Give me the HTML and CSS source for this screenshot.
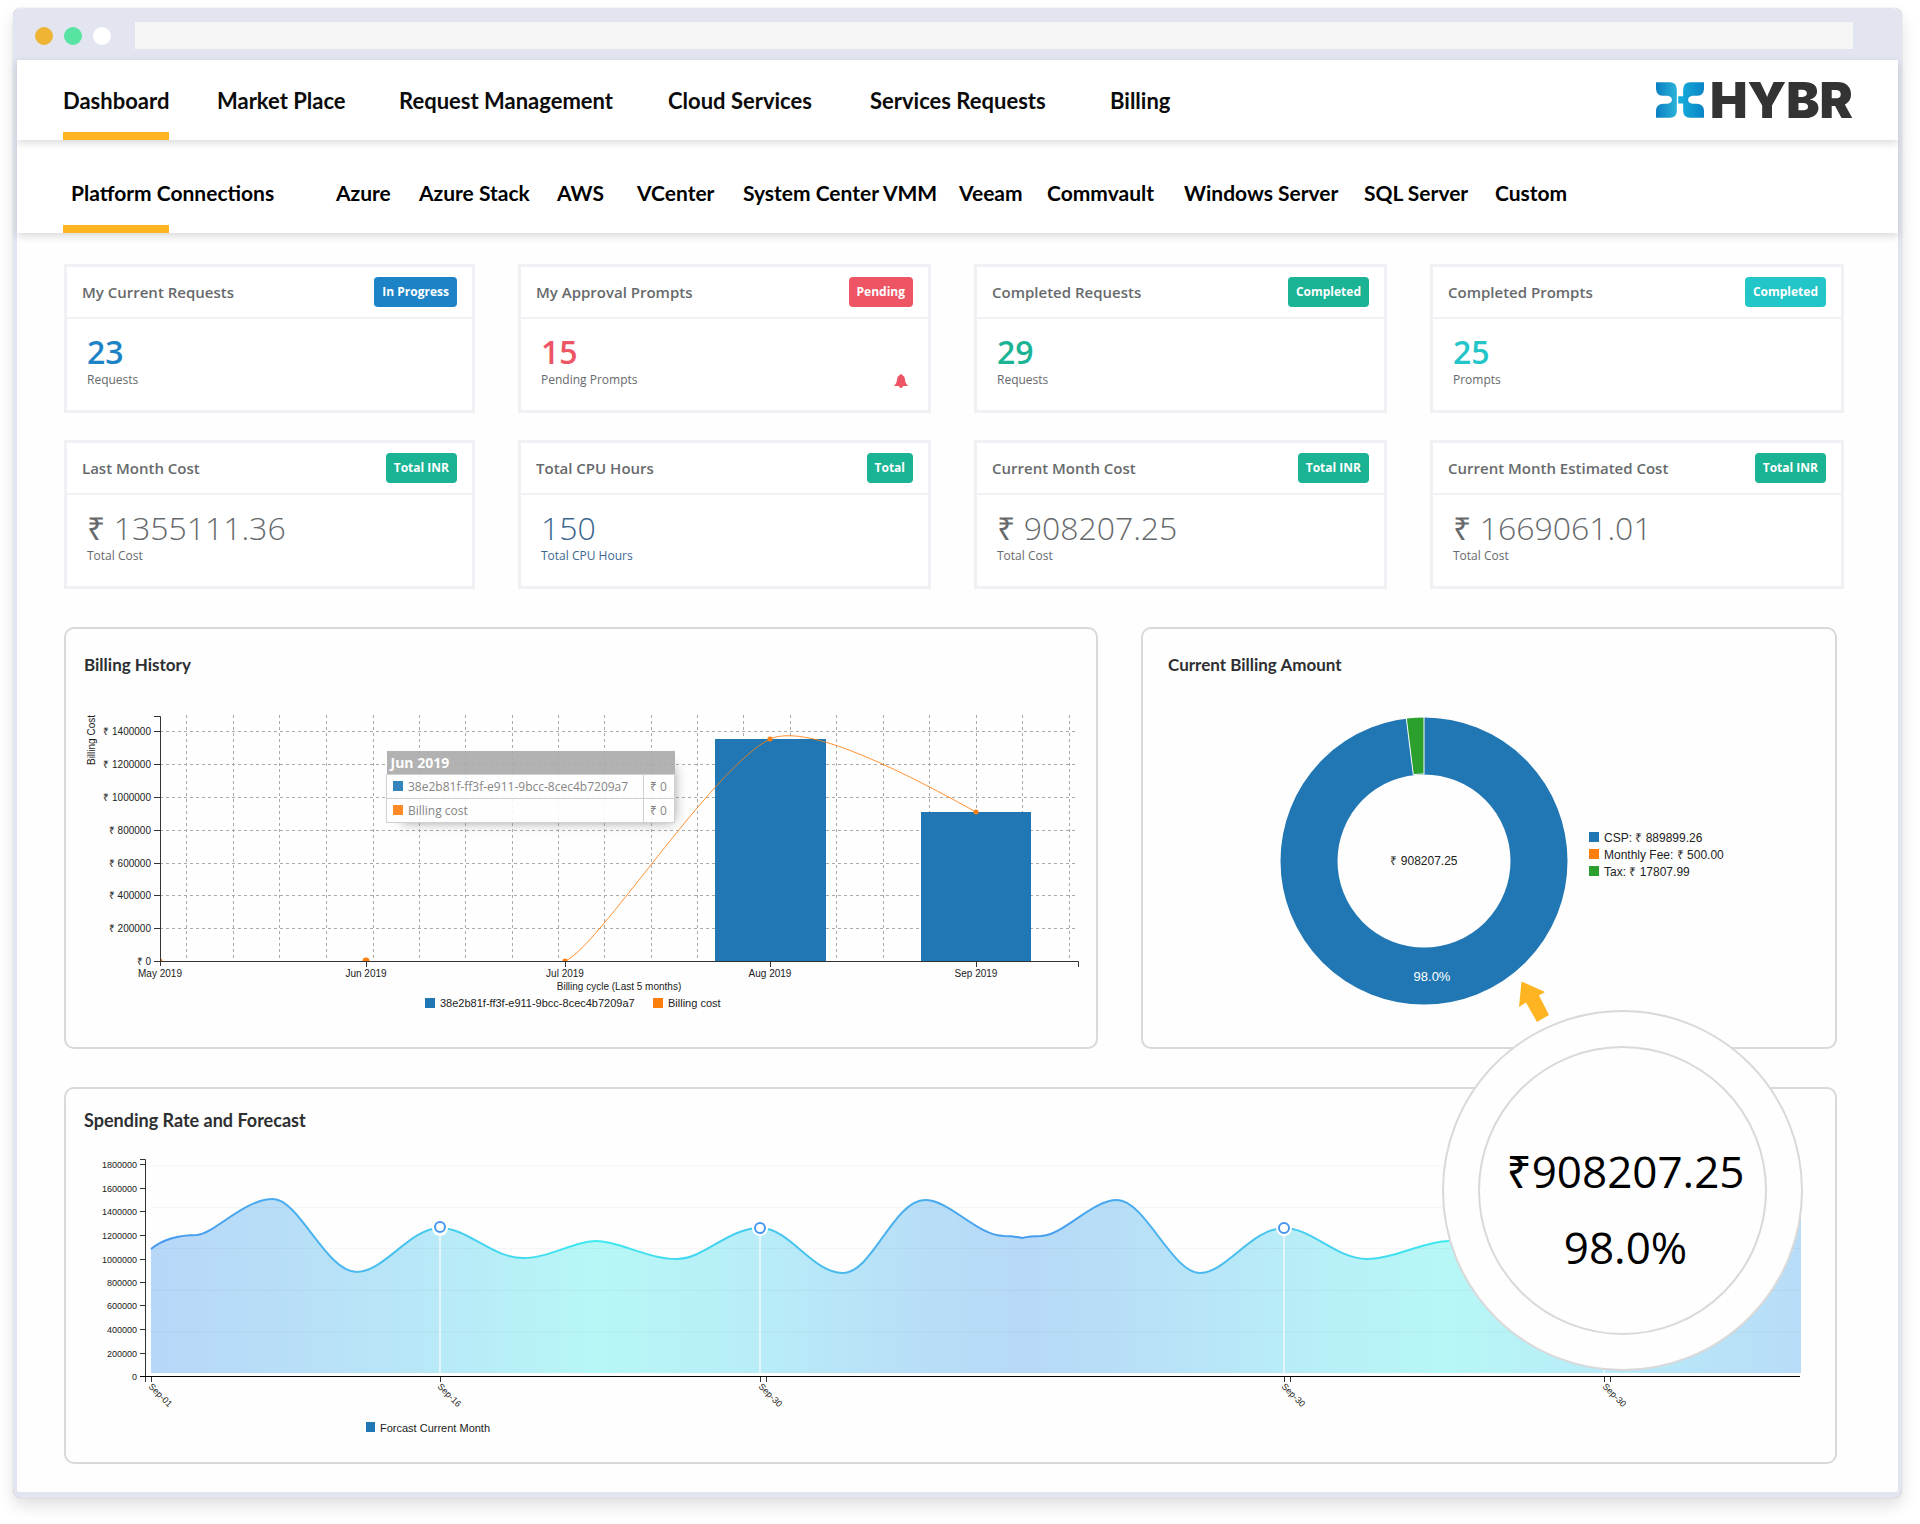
FILE: index.html
```html
<!DOCTYPE html>
<html lang="en">
<head>
<meta charset="utf-8">
<title>HYBR Dashboard</title>
<meta name="viewport" content="width=device-width, initial-scale=1">
<link rel="stylesheet" href="styles.css">
</head>
<body>
<div class="window">
  <div class="window-bar">
    <span class="dot dot-amber"></span>
    <span class="dot dot-green"></span>
    <span class="dot dot-white"></span>
    <input class="address" type="text" aria-label="Address">
  </div>

  <header class="bar bar-main">
    <nav class="nav nav-main" aria-label="Main">
      <a class="active" href="#">Dashboard</a>
      <a href="#">Market Place</a>
      <a href="#">Request Management</a>
      <a href="#">Cloud Services</a>
      <a href="#">Services Requests</a>
      <a href="#">Billing</a>
    </nav>
    <a class="logo" href="#" aria-label="HYBR">
      <svg class="logo-mark" viewBox="0 0 145 107" aria-hidden="true">
        <defs>
          <linearGradient id="petalLeft" x1="0" x2="1" y1="0" y2="0"><stop offset="0" stop-color="#0b7fc3"/><stop offset="1" stop-color="#2bb3d8"/></linearGradient>
          <linearGradient id="petalRight" x1="0" x2="1" y1="0" y2="0"><stop offset="0" stop-color="#16b0dc"/><stop offset="1" stop-color="#0a84c6"/></linearGradient>
        </defs>
        <path fill="url(#petalLeft)" d="M0 0H42Q63 1 63 22V85Q63 106 42 107H0V86Q1 66 22 65H34Q48 63 48 53Q48 43 34 41H22Q1 40 0 20Z"/>
        <path fill="url(#petalRight)" d="M145 0H103Q82 1 82 22V42H67V64H82V85Q82 106 103 107H145V86Q144 66 123 65H111Q97 63 97 53Q97 43 111 41H123Q144 40 145 20Z"/>
      </svg>
      <span class="logo-text">HYBR</span>
    </a>
  </header>

  <div class="bar bar-sub">
    <nav class="nav nav-sub" aria-label="Platforms">
      <a class="active" href="#">Platform Connections</a>
      <a href="#">Azure</a>
      <a href="#">Azure Stack</a>
      <a href="#">AWS</a>
      <a href="#">VCenter</a>
      <a href="#">System Center VMM</a>
      <a href="#">Veeam</a>
      <a href="#">Commvault</a>
      <a href="#">Windows Server</a>
      <a href="#">SQL Server</a>
      <a href="#">Custom</a>
    </nav>
  </div>

  <main>
    <section class="cards" aria-label="Summary">
      <article class="card blue">
        <div class="card-head"><h2>My Current Requests</h2><span class="badge">In Progress</span></div>
        <div class="card-body"><div><p class="count">23</p><p class="unit">Requests</p></div></div>
      </article>
      <article class="card red">
        <div class="card-head"><h2>My Approval Prompts</h2><span class="badge">Pending</span></div>
        <div class="card-body"><div><p class="count">15</p><p class="unit">Pending Prompts</p></div>
          <svg class="bell" viewBox="0 0 14 14" aria-hidden="true"><path d="M7 0Q8 0 8 1Q11 2 11 6Q11 9 14 12H0Q3 9 3 6Q3 2 6 1Q6 0 7 0ZM5 12H9Q9 14 7 14Q5 14 5 12Z"/></svg></div>
      </article>
      <article class="card green">
        <div class="card-head"><h2>Completed Requests</h2><span class="badge">Completed</span></div>
        <div class="card-body"><div><p class="count">29</p><p class="unit">Requests</p></div></div>
      </article>
      <article class="card teal">
        <div class="card-head"><h2>Completed Prompts</h2><span class="badge">Completed</span></div>
        <div class="card-body"><div><p class="count">25</p><p class="unit">Prompts</p></div></div>
      </article>
      <article class="card green">
        <div class="card-head"><h2>Last Month Cost</h2><span class="badge">Total INR</span></div>
        <div class="card-body"><div><p class="amount"><b>₹</b> 1355111.36</p><p class="unit">Total Cost</p></div></div>
      </article>
      <article class="card green hours">
        <div class="card-head"><h2>Total CPU Hours</h2><span class="badge">Total</span></div>
        <div class="card-body"><div><p class="amount">150</p><p class="unit">Total CPU Hours</p></div></div>
      </article>
      <article class="card green">
        <div class="card-head"><h2>Current Month Cost</h2><span class="badge">Total INR</span></div>
        <div class="card-body"><div><p class="amount"><b>₹</b> 908207.25</p><p class="unit">Total Cost</p></div></div>
      </article>
      <article class="card green">
        <div class="card-head"><h2>Current Month Estimated Cost</h2><span class="badge">Total INR</span></div>
        <div class="card-body"><div><p class="amount"><b>₹</b> 1669061.01</p><p class="unit">Total Cost</p></div></div>
      </article>
    </section>

    <div class="panels">
      <section class="panel history">
        <h2>Billing History</h2>
        <div class="chart">
          <svg viewBox="66 700 1030 347" role="img" aria-label="Billing cost per billing cycle">
            <g class="grid">
              <path d="M160 731.5H1078M160 764.5H1078M160 797.5H1078M160 830.5H1078M160 863.5H1078M160 895.5H1078M160 928.5H1078"/>
              <path d="M186.5 715V961M233.5 715V961M279.5 715V961M326.5 715V961M373.5 715V961M419.5 715V961M465.5 715V961M512.5 715V961M558.5 715V961M604.5 715V961M651.5 715V961M697.5 715V961M743.5 715V961M790.5 715V961M836.5 715V961M883.5 715V961M929.5 715V961M976.5 715V961M1022.5 715V961M1069.5 715V961"/>
            </g>
            <g class="bars"><rect x="715" y="739" width="111" height="222"/><rect x="921" y="812" width="110" height="149"/></g>
            <path class="trend" d="M565 961C596 950 712 768 770 739C800 726 868 752 976 812"/>
            <g class="points"><path d="M160 958.500A2.500 2.500 0 0 1 162.500 961H160Z"/><path d="M362.500 961A3.500 3.500 0 0 1 369.500 961Z"/><path d="M562.500 961A2.500 2.500 0 0 1 567.500 961Z"/><circle cx="770" cy="739" r="2.500"/><circle cx="976" cy="812" r="2.500"/></g>
            <path class="axis" d="M154 716.500H160.500V966M154 731.500H160M154 764.500H160M154 797.500H160M154 830.500H160M154 863.500H160M154 895.500H160M154 928.500H160M154 961.500H1078.500V967M366.500 961V967M565.500 961V967M770.500 961V967M976.500 961V967"/>
            <g class="tick end"><text x="151" y="735">₹ 1400000</text><text x="151" y="768">₹ 1200000</text><text x="151" y="801">₹ 1000000</text><text x="151" y="834">₹ 800000</text><text x="151" y="867">₹ 600000</text><text x="151" y="899">₹ 400000</text><text x="151" y="932">₹ 200000</text><text x="151" y="965">₹ 0</text></g>
            <g class="tick mid"><text x="160" y="977">May 2019</text><text x="366" y="977">Jun 2019</text><text x="565" y="977">Jul 2019</text><text x="770" y="977">Aug 2019</text><text x="976" y="977">Sep 2019</text><text x="619" y="990">Billing cycle (Last 5 months)</text></g>
            <text class="tick end" transform="translate(95 715) rotate(-90)">Billing Cost</text>
            <g class="legend"><rect class="c-blue" x="425" y="998" width="10" height="10"/><text x="440" y="1007">38e2b81f-ff3f-e911-9bcc-8cec4b7209a7</text><rect class="c-orange" x="653" y="998" width="10" height="10"/><text x="668" y="1007">Billing cost</text></g>
          </svg>
          <table class="tip">
            <thead><tr><th colspan="2">Jun 2019</th></tr></thead>
            <tbody>
              <tr><td><i class="key key-blue"></i>38e2b81f-ff3f-e911-9bcc-8cec4b7209a7</td><td>₹ 0</td></tr>
              <tr><td><i class="key key-orange"></i>Billing cost</td><td>₹ 0</td></tr>
            </tbody>
          </table>
        </div>
      </section>

      <section class="panel current">
        <h2>Current Billing Amount</h2>
        <div class="chart">
          <svg viewBox="1143 700 692 347" role="img" aria-label="Share of the current billing amount">
            <circle class="ring" cx="1424" cy="861" r="115"/>
            <path class="slice" d="M1424 717V774A87 87 0 0 0 1413.300 774.700L1406.300 718.100A144 144 0 0 1 1424 717Z"/>
            <text class="total" x="1424" y="865">₹ 908207.25</text>
            <text class="share" x="1432" y="981">98.0%</text>
            <g class="legend wide"><rect class="c-blue" x="1589" y="832" width="10" height="10"/><text x="1604" y="842">CSP: ₹ 889899.26</text><rect class="c-orange" x="1589" y="849" width="10" height="10"/><text x="1604" y="859">Monthly Fee: ₹ 500.00</text><rect class="c-green" x="1589" y="866" width="10" height="10"/><text x="1604" y="876">Tax: ₹ 17807.99</text></g>
            <path class="arrow" d="M1521.500 981.500L1545 992L1539 995.500L1549 1015L1537 1022L1526 1002.500L1519 1007Z"/>
          </svg>
        </div>
      </section>

      <section class="panel spending">
        <h2>Spending Rate and Forecast</h2>
        <div class="chart">
          <svg viewBox="66 1140 1769 322" role="img" aria-label="Spending rate and forecast">
            <defs>
              <linearGradient id="areaFill" gradientUnits="userSpaceOnUse" x1="151" y1="0" x2="1801" y2="0">
                <stop offset="0" stop-color="#b7d7f8"/><stop offset=".1" stop-color="#b8e0f7"/><stop offset=".2" stop-color="#b8edf8"/><stop offset=".27" stop-color="#b7f7f6"/><stop offset=".37" stop-color="#b8edf8"/><stop offset=".45" stop-color="#b8e0f7"/><stop offset=".53" stop-color="#b7d9f7"/><stop offset=".6" stop-color="#b8e0f7"/><stop offset=".69" stop-color="#b8edf8"/><stop offset=".785" stop-color="#b7f7f6"/><stop offset=".86" stop-color="#b8eef8"/><stop offset=".95" stop-color="#b8e2f7"/><stop offset="1" stop-color="#b8dcf8"/>
              </linearGradient>
              <linearGradient id="lineStroke" gradientUnits="userSpaceOnUse" x1="151" y1="0" x2="1801" y2="0">
                <stop offset="0" stop-color="#4597ee"/><stop offset=".12" stop-color="#4bb9ee"/><stop offset=".27" stop-color="#3deaf0"/><stop offset=".42" stop-color="#4bb9ee"/><stop offset=".53" stop-color="#459bee"/><stop offset=".64" stop-color="#4bb9ee"/><stop offset=".785" stop-color="#3deaf0"/><stop offset="1" stop-color="#4597ee"/>
              </linearGradient>
            </defs>
            <path fill="url(#areaFill)" d="M151 1249C162 1240 176 1235 197 1235C214 1234 244 1199 273 1199C299 1199 326 1272 357 1272C384 1272 410 1228 440 1228C468 1228 492 1258 523 1258C550 1258 574 1241 596 1241C620 1241 646 1259 677 1259C704 1259 728 1228 760 1228C790 1228 812 1273 843 1273C872 1273 894 1200 925 1200C950 1200 976 1235 1004 1236Q1014 1236 1022 1238Q1030 1236 1041 1236C1064 1235 1092 1200 1117 1200C1145 1200 1172 1273 1200 1273C1226 1273 1252 1228 1284 1228C1312 1228 1336 1259 1367 1259C1394 1259 1424 1241 1449 1241C1480 1241 1500 1259 1532 1259C1560 1259 1584 1228 1604 1228C1640 1228 1670 1272 1700 1272C1730 1272 1760 1200 1801 1200V1373H151Z"/>
            <path class="faint" d="M151 1166H1800M151 1207.500H1800M151 1248.500H1800M151 1290.500H1800M151 1332H1800"/>
            <path class="spend-line" stroke="url(#lineStroke)" d="M151 1249C162 1240 176 1235 197 1235C214 1234 244 1199 273 1199C299 1199 326 1272 357 1272C384 1272 410 1228 440 1228C468 1228 492 1258 523 1258C550 1258 574 1241 596 1241C620 1241 646 1259 677 1259C704 1259 728 1228 760 1228C790 1228 812 1273 843 1273C872 1273 894 1200 925 1200C950 1200 976 1235 1004 1236Q1014 1236 1022 1238Q1030 1236 1041 1236C1064 1235 1092 1200 1117 1200C1145 1200 1172 1273 1200 1273C1226 1273 1252 1228 1284 1228C1312 1228 1336 1259 1367 1259C1394 1259 1424 1241 1449 1241"/>
            <path class="drop" d="M440 1234V1373M760 1234V1373M1284 1234V1373M1604 1234V1373"/>
            <g class="halo"><circle cx="440" cy="1228" r="8"/><circle cx="760" cy="1228" r="8"/><circle cx="1284" cy="1228" r="8"/></g>
            <g class="marker"><circle cx="440" cy="1227" r="5"/><circle cx="760" cy="1228" r="5"/><circle cx="1284" cy="1228" r="5"/></g>
            <path class="axis" d="M140 1159.500H145.500V1382M140 1164.500H145M140 1188.500H145M140 1211.500H145M140 1235.500H145M140 1259.500H145M140 1282.500H145M140 1305.500H145M140 1329.500H145M140 1353.500H145M151.500 1377V1382M440.500 1377V1382M760.500 1377V1382M766.500 1377V1382M1284.500 1377V1382M1290.500 1377V1382M1604.500 1377V1382M1610.500 1377V1382"/>
            <path class="axis base" d="M140 1376.500H1800"/>
            <g class="tick small end"><text x="137" y="1168">1800000</text><text x="137" y="1192">1600000</text><text x="137" y="1215">1400000</text><text x="137" y="1239">1200000</text><text x="137" y="1263">1000000</text><text x="137" y="1286">800000</text><text x="137" y="1309">600000</text><text x="137" y="1333">400000</text><text x="137" y="1357">200000</text><text x="137" y="1380">0</text></g>
            <g class="tick small"><text transform="translate(148 1387) rotate(45)">Sep-01</text><text transform="translate(437 1387) rotate(45)">Sep-16</text><text transform="translate(758 1387) rotate(45)">Sep-30</text><text transform="translate(1281 1387) rotate(45)">Sep-30</text><text transform="translate(1602 1387) rotate(45)">Sep-30</text></g>
            <g class="legend"><rect class="c-blue" x="366" y="1422" width="9" height="10"/><text x="380" y="1432">Forcast Current Month</text></g>
          </svg>
        </div>
      </section>

      <div class="lens">
        <div class="lens-glass"><span>₹908207.25</span><span>98.0%</span></div>
      </div>
    </div>
  </main>
</div>
</body>
</html>
```
FILE: styles.css
```css
* { box-sizing: border-box; }

body {
  margin: 0;
  padding: 8px 18px 26px 13px;
  background: #fff;
  color: #2d2f31;
  font-family: "Open Sans", "Noto Sans", sans-serif;
}

h2, p { margin: 0; }
a { color: inherit; text-decoration: none; }

.window {
  background: #fefefe;
  border: solid #e2e4ef;
  border-width: 0 4px 6px;
  border-radius: 8px;
  box-shadow: 0 8px 16px rgba(0, 0, 0, .12), 0 0 1px rgba(0, 0, 0, .3);
}

.window-bar {
  display: flex;
  align-items: center;
  gap: 11px;
  height: 52px;
  padding: 3px 45px 0 18px;
  background: #e2e4ef;
  border-radius: 6px 6px 0 0;
}
.dot { width: 18px; height: 18px; border-radius: 50%; }
.dot-amber { background: #efb434; }
.dot-green { background: #57e3a2; }
.dot-white { background: #fff; }
.address {
  flex: 1;
  height: 27px;
  margin-left: 13px;
  border: 0;
  background: #f6f6f6;
}

.bar {
  position: relative;
  display: flex;
  justify-content: space-between;
  padding: 0 45px 0 46px;
  background: #fff;
  box-shadow: 0 3px 8px rgba(0, 0, 0, .15);
}
.bar-main { height: 80px; z-index: 1; }
.bar-sub { height: 93px; }

.nav {
  display: grid;
  color: #0b0b0b;
  font-family: Lato, "Open Sans", sans-serif;
  font-weight: 700;
  white-space: nowrap;
}
.nav a { display: flex; align-items: center; position: relative; }
.nav-main { grid-template-columns: 154px 182px 269px 202px 240px 80px; font-size: 22px; }
.nav-sub { grid-template-columns: 273px 83px 138px 80px 106px 216px 88px 137px 180px 131px 80px; color: #000; font-size: 21px; }
.nav-sub a { padding-top: 11px; }
.nav-sub a:first-child { padding-left: 8px; }
.nav .active::after {
  content: "";
  position: absolute;
  left: 0;
  bottom: 0;
  width: 106px;
  height: 8px;
  background: #ffb422;
}

.logo { display: flex; align-items: center; gap: 6px; }
.logo-mark { width: 48px; height: 36px; }
.logo-text {
  color: #333;
  font: 900 50px/1 Inter, "Open Sans", sans-serif;
}

main { padding: 31px 54px 28px 47px; }

.cards {
  display: grid;
  grid-template-columns: 411fr 413fr 413fr 414fr;
  gap: 27px 43px;
}
.card {
  min-height: 149px;
  border: 3px solid #eff1f4;
  background: #fff;
  color: #676a6c;
}
.card-head {
  display: flex;
  align-items: center;
  justify-content: space-between;
  height: 52px;
  padding: 0 15px;
  border-bottom: 2px solid #eff1f4;
}
.card h2 { font-size: 15px; font-weight: 600; line-height: 20px; }
.badge {
  padding: 0 8px;
  border-radius: 4px;
  background: var(--tone);
  color: #fff;
  font-size: 12px;
  font-weight: 700;
  line-height: 30px;
}
.card-body {
  display: flex;
  align-items: flex-end;
  justify-content: space-between;
  padding: 13px 20px;
}
.count, .amount { font-size: 32px; line-height: 40px; }
.count { color: var(--tone); font-weight: 600; }
.amount { font-weight: 300; }
.amount b { font-weight: 400; }
.unit { font-size: 12px; line-height: 16px; }
.bell { width: 14px; height: 14px; fill: #ed5565; }

.blue { --tone: #1c84c6; }
.red { --tone: #ed5565; }
.green { --tone: #1ab394; }
.teal { --tone: #23c6c8; }
.hours .card-body { color: #3b678f; }

.panels {
  position: relative;
  display: grid;
  grid-template-columns: 1034fr 696fr;
  gap: 38px 43px;
  margin: 38px 7px 0 0;
}
.panel {
  border: 2px solid #d9d9d9;
  border-radius: 10px;
  background: #fefefe;
}
.panel h2 {
  padding: 25px 18px;
  font-family: Lato, "Open Sans", sans-serif;
  font-size: 17px;
  line-height: 21px;
}
.current h2 { padding-left: 25px; }
.spending { grid-column: 1 / -1; }
.spending h2 { padding: 21px 18px 9px; font-size: 18px; }
.chart { position: relative; }
.chart svg { display: block; width: 100%; }

.chart text { font-family: "Liberation Sans", Arial, sans-serif; fill: #222; }
.tick { font-size: 10px; }
.small { font-size: 9px; }
.end { text-anchor: end; }
.mid { text-anchor: middle; }
.legend { font-size: 11px; }
.wide { font-size: 12px; }
.grid { fill: none; stroke: #aaa; stroke-dasharray: 3 3; }
.axis { fill: none; stroke: #333; }
.base { stroke: #000; }
.bars, .c-blue { fill: #2077b4; }
.c-orange, .points { fill: #ff7f0e; }
.c-green { fill: #2ca02c; }
.trend { fill: none; stroke: #ff7f0e; opacity: .85; }
.spend-line { fill: none; stroke-width: 2; }
.ring { fill: none; stroke: #2077b4; stroke-width: 57; }
.slice { fill: #2ca02c; stroke: #fff; }
.total { font-size: 12px; text-anchor: middle; }
.chart .share { fill: #fff; font-size: 13px; text-anchor: middle; }
.arrow { fill: #ffb422; }
.faint { stroke: #000; opacity: .03; }
.drop { stroke: #fff; stroke-width: 2; opacity: .6; }
.halo { fill: #fff; }
.marker { fill: #fff; stroke: #4597ee; stroke-width: 2; }

.tip {
  position: absolute;
  left: 320px;
  top: 51px;
  width: 289px;
  border-collapse: collapse;
  background: #fff;
  box-shadow: 7px 7px 12px -9px #777;
  color: #777;
  font-size: 12px;
  line-height: 23px;
  opacity: .9;
  white-space: nowrap;
}
.tip th {
  padding: 0 4px;
  background: #aaa;
  color: #fff;
  font-size: 14px;
  text-align: left;
}
.tip td { padding: 0 6px; border: 1px solid #ccc; }
.tip td + td { border-left: 1px dotted #999; }
.key { display: inline-block; width: 10px; height: 10px; margin-right: 5px; }
.key-blue { background: #2077b4; }
.key-orange { background: #ff7f0e; }

.lens {
  position: absolute;
  right: 34px;
  bottom: 93px;
  width: 361px;
  height: 361px;
  padding: 34px;
  border: 2px solid #d9d9d9;
  border-radius: 50%;
  background: #fefefe;
}
.lens-glass {
  display: flex;
  flex-direction: column;
  align-items: center;
  justify-content: center;
  gap: 16px;
  height: 100%;
  padding: 36px 0 0 6px;
  border: 2px solid #d9d9d9;
  border-radius: 50%;
  color: #000;
  font-size: 44px;
  line-height: 60px;
}
```
